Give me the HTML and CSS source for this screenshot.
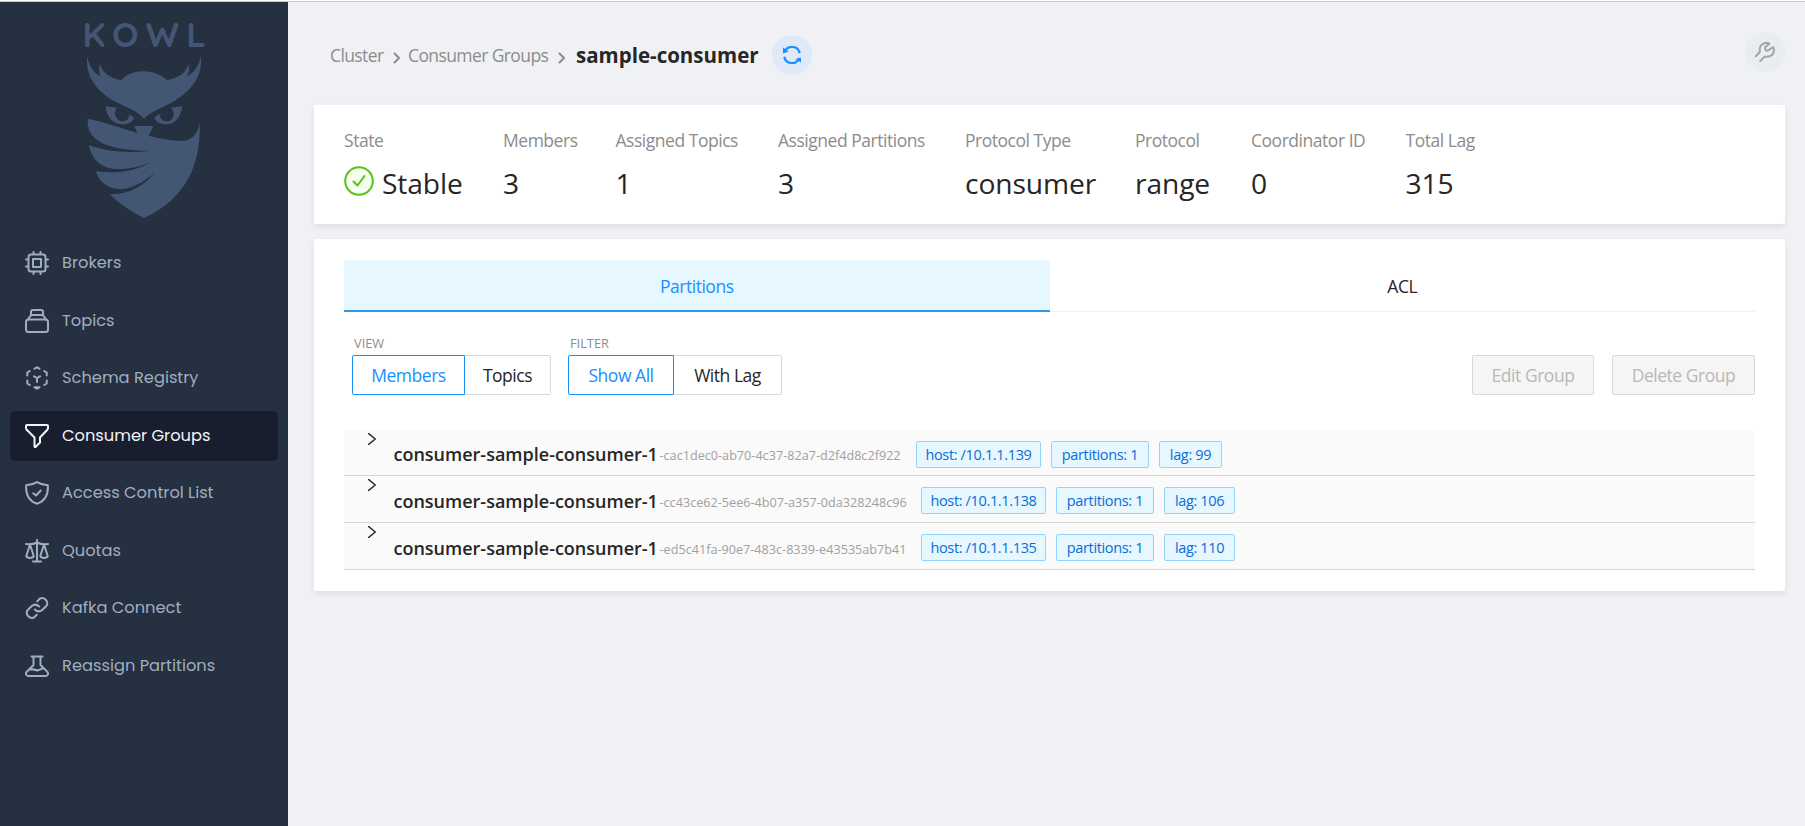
FILE: index.html
```html
<!DOCTYPE html>
<html lang="en">
<head>
<meta charset="utf-8">
<title>Kowl</title>
<link rel="stylesheet" href="styles.css">
</head>
<body>
<div class="app">
  <aside class="sidebar">
    <div class="brand">
      <div class="brand-name">KOWL</div>
      <svg class="owl" viewBox="0 0 342 486" width="114" height="162">
        <path d="M1 0C4 26 18 50 42 62C34 50 35 34 39 23C44 51 74 68 103 72C130 37 207 37 239 72C271 67 300 50 304 23C308 36 307 50 299 62C324 49 337 27 341 0C349 63 310 105 263 134C224 157 193 165 171 188C152 164 117 154 80 134C34 107-7 64 1 0Z"/>
        <path d="M56 151L89 155C76 177 92 196 107 196C121 196 130 183 124 175Q134 178 141 186C132 205 113 206 101 205C76 202 58 181 56 151Z"/>
        <path d="M286 151L252 155C270 177 254 196 241 196C223 196 216 183 221 173Q208 177 202 186C212 205 232 206 243 205C268 200 282 181 286 151Z"/>
        <path d="M3 188C54 199 104 216 151 231L142 210H199L185 239C217 248 261 255 291 254C319 251 333 228 338 200C342 320 302 426 171 486C133 468 96 443 69 415C126 417 173 388 204 349C169 380 134 400 96 400C59 397 33 373 27 346C95 354 149 344 193 317C154 335 115 341 77 338C37 333 11 304 6 267C57 287 124 292 190 284C141 284 97 280 57 266C19 252-3 224 3 188Z"/>
      </svg>
    </div>
    <nav class="nav">
      <a class="nav-item"><svg class="icon" viewBox="0 0 24 24"><rect x="3.5" y="3.5" width="17" height="17" rx="2.5"/><rect x="8" y="8" width="8" height="8"/><path d="M8.5 1v2M15.500 1v2M8.500 21v2M15.500 21v2M1 8.500h2M1 15.500h2M21 8.500h2M21 15.500h2"/></svg><span>Brokers</span></a>
      <a class="nav-item"><svg class="icon" viewBox="0 0 24 24"><rect x="1" y="10.500" width="22" height="12.500" rx="2.500"/><path d="M3 10.500 5.300 7Q6 6 7 6H17Q18 6 18.700 7L21 10.500M6 6V3Q6 1 8 1H16Q18 1 18 3V6"/></svg><span>Topics</span></a>
      <a class="nav-item"><svg class="icon" viewBox="0 0 24 24"><path d="M9.500 2.700 12 1.300 14.500 2.700M4.800 5 2.300 6.500V9.500M19.200 5 21.700 6.500V9.500M2.300 14.500V17.500L4.800 19M21.700 14.500V17.500L19.200 19M9.500 21.300 12 22.700 14.500 21.300ZM9 10.300 12 12 15 10.300M12 12V16"/></svg><span>Schema Registry</span></a>
      <a class="nav-item active"><svg class="icon" viewBox="0 0 24 24"><path d="M2 1H22Q23 1 23 2V4Q23 5 22.300 5.800L15 13.500V18.500L10.500 23Q9.500 23.400 9.500 22V13.500L1.700 5.800Q1 5 1 4V2Q1 1 2 1Z"/></svg><span>Consumer Groups</span></a>
      <a class="nav-item"><svg class="icon" viewBox="0 0 24 24"><path d="M12 1.200Q16.500 4 22.800 4.200C23.500 14 20 20 12 22.800C4 20 .5 14 1.200 4.200Q7.500 4 12 1.200ZM8.300 12.300 11 14.500 15.700 9.500"/></svg><span>Access Control List</span></a>
      <a class="nav-item"><svg class="icon" viewBox="0 0 24 24"><path d="M12 1V22M8 22.500H16M1 5Q7 6 12 3.500Q17 6 23 5M5 5.500 1.300 17C2 19.500 8 19.500 8.700 17ZM19 5.500 15.300 17C16 19.500 22 19.500 22.700 17Z"/></svg><span>Quotas</span></a>
      <a class="nav-item"><svg class="icon" viewBox="0 0 24 24"><path d="M12.300 5.200 15 2.500A5.200 5.200 0 0 1 21.700 9.500L17.200 14Q13.500 17 9.800 13.500M11.700 18.800 9 21.500A5.200 5.200 0 0 1 2.300 14.500L6.800 10Q10.500 7 14.200 10.500"/></svg><span>Kafka Connect</span></a>
      <a class="nav-item"><svg class="icon" viewBox="0 0 24 24"><path d="M6.500 2.500H17.500M8.500 2.500V11L2 17.500C0 19.500 1 22 3.500 22H20.500C23 22 24 19.500 22 17.500L15.500 11V2.500M5 15.500Q9 15 12 16.500Q15 16 18 14"/></svg><span>Reassign Partitions</span></a>
    </nav>
  </aside>
  <main class="main">
    <header class="header">
      <span class="crumb c1">Cluster</span>
      <svg class="sep" viewBox="0 0 8 12"><path d="M1.500 1.500 6 6 1.500 10.500"/></svg>
      <span class="crumb c2">Consumer Groups</span>
      <svg class="sep" viewBox="0 0 8 12"><path d="M1.500 1.500 6 6 1.500 10.500"/></svg>
      <h1 class="title">sample-consumer</h1>
      <button class="round refresh"><svg viewBox="0 0 18 18" width="18" height="18"><path d="M1.800 5.800A7.800 7.800 0 0 1 16.700 7.300M16.200 12.200A7.800 7.800 0 0 1 1.300 10.700"/><path class="tip" d="M0 1.500V7.500L5.500 5.500ZM18 16.500V11.500L12.500 13Z"/></svg></button>
      <button class="round tools"><svg viewBox="0 0 20 20" width="20" height="20"><path d="M.8 14.300 4.500 10.300Q5.300 9.300 4.800 7.700C4.300 3.500 8 0 14 1.200L14.200 2 10.500 4.800Q9 8 12.500 8.800L18.200 5.200Q20 9 17.500 12.500Q14.500 15.500 9.500 14.600L5.300 19.200"/></svg></button>
    </header>
    <section class="card stats">
      <div class="stat s1"><div class="label">State</div><div class="value"><svg class="check" viewBox="0 0 30 30" width="30" height="30"><circle cx="15" cy="15" r="13.800"/><path d="M9.500 15.500 13.500 19.500 20.500 10"/></svg><span>Stable</span></div></div>
      <div class="stat s2"><div class="label">Members</div><div class="value">3</div></div>
      <div class="stat s3"><div class="label">Assigned Topics</div><div class="value">1</div></div>
      <div class="stat s4"><div class="label">Assigned Partitions</div><div class="value">3</div></div>
      <div class="stat s5"><div class="label">Protocol Type</div><div class="value">consumer</div></div>
      <div class="stat s6"><div class="label">Protocol</div><div class="value">range</div></div>
      <div class="stat s7"><div class="label">Coordinator ID</div><div class="value">0</div></div>
      <div class="stat s8"><div class="label">Total Lag</div><div class="value">315</div></div>
    </section>
    <section class="card details">
      <div class="tabs"><div class="tab selected">Partitions</div><div class="tab">ACL</div></div>
      <div class="controls">
        <div class="group view"><div class="caption">VIEW</div><div class="segmented"><button class="seg on">Members</button><button class="seg">Topics</button></div></div>
        <div class="group filter"><div class="caption">FILTER</div><div class="segmented"><button class="seg on">Show All</button><button class="seg">With Lag</button></div></div>
        <div class="actions"><button class="btn edit" disabled>Edit Group</button><button class="btn delete" disabled>Delete Group</button></div>
      </div>
      <div class="rows">
        <div class="row"><svg class="arrow" viewBox="0 0 8 12"><path d="M.5 .5 7.300 6 .5 11.500"/></svg><span class="name">consumer-sample-consumer-1</span><span class="uid">-cac1dec0-ab70-4c37-82a7-d2f4d8c2f922</span><span class="tag host">host: /10.1.1.139</span><span class="tag parts">partitions: 1</span><span class="tag lag2">lag: 99</span></div>
        <div class="row"><svg class="arrow" viewBox="0 0 8 12"><path d="M.5 .5 7.300 6 .5 11.500"/></svg><span class="name">consumer-sample-consumer-1</span><span class="uid wide">-cc43ce62-5ee6-4b07-a357-0da328248c96</span><span class="tag host">host: /10.1.1.138</span><span class="tag parts">partitions: 1</span><span class="tag lag3">lag: 106</span></div>
        <div class="row"><svg class="arrow" viewBox="0 0 8 12"><path d="M.5 .5 7.300 6 .5 11.500"/></svg><span class="name">consumer-sample-consumer-1</span><span class="uid wide">-ed5c41fa-90e7-483c-8339-e43535ab7b41</span><span class="tag host">host: /10.1.1.135</span><span class="tag parts">partitions: 1</span><span class="tag lag3">lag: 110</span></div>
      </div>
    </section>
  </main>
</div>
</body>
</html>
```
FILE: styles.css
```css
* { box-sizing: border-box; }
body { margin: 0; height: 826px; overflow: hidden; background: #f0f1f5; color: #262626; font: 17.5px/28px "Open Sans", "Noto Sans", sans-serif; letter-spacing: -.47px; }
button { font: inherit; letter-spacing: inherit; padding: 0; }
svg { display: block; flex: none; fill: none; stroke: currentColor; stroke-linecap: round; stroke-linejoin: round; }
.app { display: flex; height: 826px; padding-top: 1px; border-top: 1px solid #fff; box-shadow: inset 0 1px #c6c9cc; }
.sidebar { width: 288px; flex: none; background: #253041; color: #a0aebf; display: flex; flex-direction: column; }
.brand { height: 236px; display: flex; flex-direction: column; align-items: center; color: #435775; }
.brand-name { height: 54px; padding: 15px 0 0 8px; font: 700 35px/35px Quicksand, Lato, sans-serif; letter-spacing: 7.500px; }
.owl { fill: currentColor; stroke: none; }
.nav { display: flex; flex-direction: column; gap: 7.500px; padding: 0 10px; }
.nav-item { display: flex; align-items: center; height: 50px; padding-left: 15px; gap: 13px; border-radius: 5px; font: 400 16.250px/24px Poppins, Inter, sans-serif; letter-spacing: 0; white-space: nowrap; }
.nav-item.active { background: #181e2d; color: #f2f4f7; }
.icon { width: 24px; height: 24px; stroke-width: 2; }

.main { flex: 1; padding: 0 20px 0 26px; }
.header { height: 103px; padding: 3px 0 0 16px; display: flex; align-items: center; color: #8c8c8c; white-space: nowrap; }
.sep { width: 8px; height: 12px; margin-top: 6px; stroke-width: 2; }
.crumb { padding-bottom: 1px; letter-spacing: -.6px; }
.crumb.c1 { width: 63px; }
.crumb.c2 { width: 150px; margin-left: 7px; }
.title { margin: 0 0 0 10px; padding-bottom: 1px; width: 196px; font: 700 20.500px/28px "Open Sans", "Noto Sans", sans-serif; letter-spacing: 0; color: #262626; }
.round { width: 40px; height: 40px; border: 0; border-radius: 50%; display: grid; place-items: center; }
.refresh { background: #dfe9f8; color: #1890ff; }
.refresh svg { stroke-width: 2.200; stroke-linecap: butt; }
.tip { fill: currentColor; stroke: none; }
.tools { margin: -6px 0 0 auto; background: #e9ecf0; color: #a3a3a3; }
.tools svg { stroke-width: 2; }
.card { background: #fff; border-radius: 2px; box-shadow: 0 3px 6px rgba(0,0,0,.08); }
.stats { height: 119px; padding: 21px 30px; display: flex; white-space: nowrap; }
.label { color: #8c8c8c; }
.value { height: 42px; margin-top: 8px; display: flex; align-items: center; font-size: 28.200px; line-height: 40px; letter-spacing: -.1px; }
.check { margin: -5px 8px 0 0; fill: #f6ffed; stroke: #52c41a; stroke-width: 2; }
.s1 { width: 159px; } .s2 { width: 112.500px; } .s3 { width: 162.500px; } .s4 { width: 187px; }
.s5 { width: 170px; } .s6 { width: 116px; } .s7 { width: 154.500px; }
.details { margin-top: 15px; height: 352px; padding: 21px 30px; }
.tabs { display: flex; height: 52px; box-shadow: inset 0 -1px #f0f0f0; }
.tab { flex: 1; text-align: center; line-height: 53px; }
.selected { background: #e6f7ff; border-bottom: 2px solid #2f97e4; color: #1890ff; }
.controls { display: flex; height: 83px; padding: 18px 0 0 8px; }
.caption { height: 25px; padding: 1px 0 0 2px; font-size: 12.800px; line-height: 24px; letter-spacing: 0; color: #8c8c8c; }
.view { width: 216px; }
.segmented { display: flex; }
.seg { height: 40px; background: #fff; color: #262626; border: 1px solid #d9d9d9; border-left: 0; border-radius: 0 2px 2px 0; white-space: nowrap; }
.seg.on { color: #1890ff; border: 1px solid #1890ff; border-radius: 2px 0 0 2px; }
.view .seg { width: 86px; } .view .on { width: 113px; }
.filter .seg { width: 108px; } .filter .on { width: 106px; }
.actions { margin: 25px 0 0 auto; display: flex; gap: 18px; }
.btn { height: 40px; background: #f5f5f5; border: 1px solid #d9d9d9; border-radius: 2px; color: #b8b8b8; }
.edit { width: 122px; } .delete { width: 143px; }
.rows { margin-top: 35px; }
.row { height: 47px; border-bottom: 1px solid #d4d4d4; background: #fafafa; display: flex; align-items: center; padding: 3px 0 0 24px; white-space: nowrap; }
.row:first-child { height: 46px; }
.arrow { width: 8px; height: 12px; align-self: flex-start; stroke-width: 1.500; }
.name { width: 265.500px; margin-left: 17.500px; margin-right: .5px; font-weight: 600; font-size: 18px; letter-spacing: 0; }
.uid { width: 256.500px; padding-top: 2px; font-size: 12.650px; letter-spacing: 0; color: #a0a0a0; }
.uid.wide { width: 261.500px; }
.tag { height: 27px; margin-right: 10px; border: 1px solid #91d5ff; border-radius: 2px; background: #e6f7ff; color: #096dd9; text-align: center; font-size: 14.500px; line-height: 26px; letter-spacing: -.35px; }
.host { width: 125px; } .parts { width: 98px; } .lag2 { width: 63px; } .lag3 { width: 71px; }
```
